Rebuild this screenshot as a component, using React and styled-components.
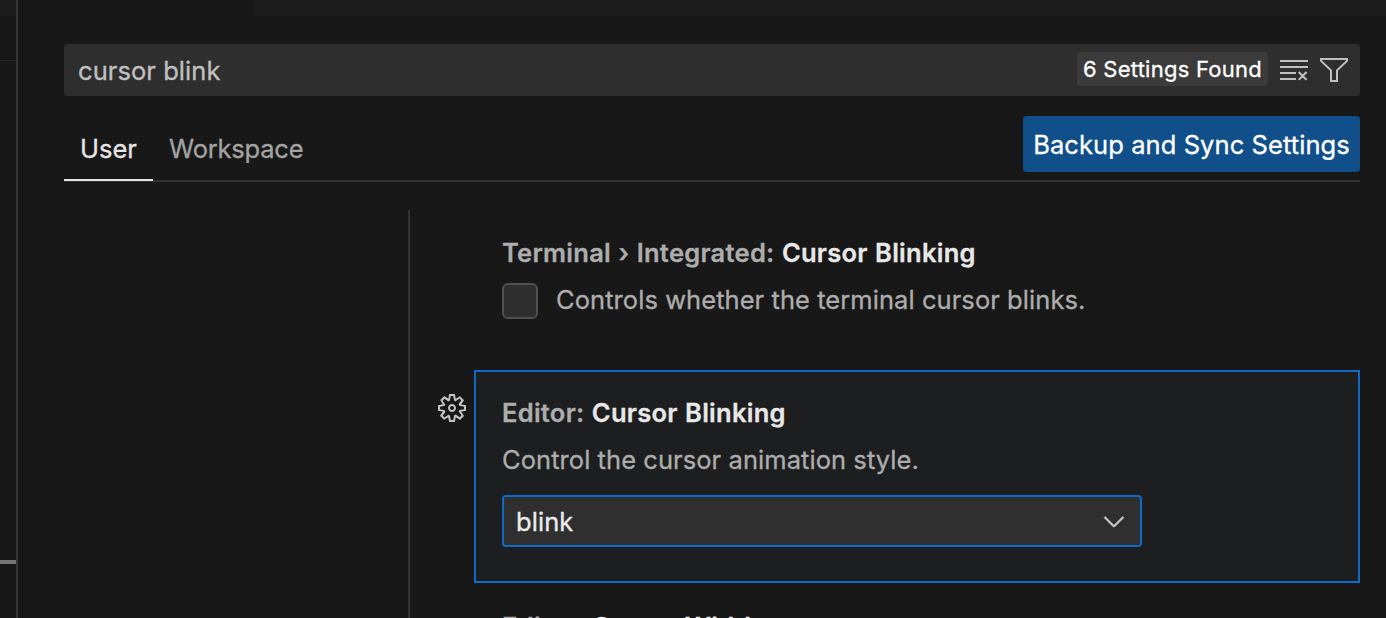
import React from "react";
import styled, { createGlobalStyle } from "styled-components";
import { VscChevronDown, VscClearAll, VscFilter, VscGear } from "react-icons/vsc";

const GlobalStyle = createGlobalStyle`
  * { box-sizing: border-box; }
  body {
    margin: 0;
    background: #181818;
    color: #adadad;
    font-family: Inter, "Liberation Sans", sans-serif;
    font-size: 25.5px;
    line-height: 36px;
    letter-spacing: 0.06px;
    -webkit-text-stroke: 0.3px currentColor;
    overflow: hidden;
  }
  svg { display: block; flex: none; }
`;

const Window = styled.div`
  display: flex;
  height: 618px;
  overflow: hidden;
`;

const SidePane = styled.div`
  display: flex;
  flex-direction: column;
  flex: none;
  width: 18px;
  border-right: 2px solid #353535;
`;

const SideHeader = styled.div`
  height: 16px;
  background: #1d1d1d;
`;

const SideSection = styled.div`
  height: 45px;
  border-bottom: 1px solid #262626;
`;

const SideHandle = styled.div`
  height: 4px;
  margin-top: 499px;
  background: #757575;
`;

const Editor = styled.main`
  display: flex;
  flex-direction: column;
  flex: 1;
  min-width: 0;
`;

const TabStrip = styled.div`
  flex: none;
  height: 16px;
  margin-left: 236px;
  background: #1d1d1d;
`;

const Content = styled.div`
  display: flex;
  flex-direction: column;
  flex: 1;
  min-height: 0;
  padding: 28px 26px 0 46px;
`;

const SearchBar = styled.div`
  display: flex;
  align-items: center;
  flex: none;
  height: 52px;
  padding: 0 10px 0 14px;
  border-radius: 4px;
  background: #2e2e2e;
  color: #c0c0c0;
`;

const Query = styled.span`
  flex: 1;
  padding-top: 2px;
`;

const ResultCount = styled.span`
  width: 191px;
  height: 34px;
  margin: 0 10px 2px 0;
  border-radius: 4px;
  background: #3b3b3b;
  color: #fff;
  font-size: 22px;
  line-height: 34px;
  letter-spacing: 0.25px;
  text-align: center;
  white-space: nowrap;
`;

const SearchAction = styled.span`
  margin-right: ${(p) => p.$gap || "0"};
`;

const ScopeBar = styled.div`
  display: flex;
  align-items: flex-start;
  flex: none;
  height: 86px;
  padding-top: 20px;
  border-bottom: 2px solid #333;
`;

const ScopeTab = styled.div`
  width: ${(p) => p.$width};
  height: 65px;
  padding: 15px 0 0 16px;
  border-bottom: 2px solid ${(p) => (p.$active ? "#e4e4e4" : "transparent")};
  color: ${(p) => (p.$active ? "#e6e6e6" : "#a3a3a3")};
  letter-spacing: ${(p) => (p.$active ? "0" : "-0.2px")};
`;

const SyncButton = styled.button`
  width: 337px;
  height: 56px;
  margin-left: auto;
  padding: 2px 0 0;
  border: 0;
  border-radius: 4px;
  background: #114f8a;
  color: #fff;
  font: inherit;
  letter-spacing: 0.08px;
  white-space: nowrap;
`;

const Body = styled.div`
  display: flex;
  flex: 1;
  min-height: 0;
  padding-top: 28px;
`;

const Outline = styled.div`
  flex: none;
  width: 346px;
  border-right: 2px solid #333;
`;

const Settings = styled.div`
  flex: 1;
  min-width: 0;
`;

const Setting = styled.section`
  padding-left: 92px;
  height: 160px;
  padding-top: 25px;
`;

const Title = styled.h3`
  margin: 0;
  font-size: 25.5px;
  font-weight: 600;
  line-height: 36px;
  letter-spacing: 0.27px;
  word-spacing: 0.7px;
  white-space: nowrap;
`;

const Name = styled.span`
  color: #e8e8e8;
`;

const Description = styled.div`
  margin-top: 11px;
  white-space: nowrap;
`;

const CheckRow = styled.label`
  display: flex;
  align-items: center;
  gap: 18px;
  margin-top: 12px;
  height: 36px;
  white-space: nowrap;
`;

const CheckBox = styled.span`
  width: 36px;
  height: 36px;
  border: 2px solid #505050;
  border-radius: 6px;
  background: #2e2e2e;
`;

const CheckLabel = styled.span`
  padding-bottom: 2px;
`;

const FocusedRow = styled.div`
  display: flex;
  padding-left: 26px;
  color: #c4c4c4;
`;

const GearSlot = styled.div`
  flex: none;
  width: 38px;
  padding-top: 22px;
`;

const FocusedSetting = styled.section`
  flex: 1;
  height: 213px;
  padding: 23px 26px;
  border: 2px solid #0f69c8;
  background: #1d1e1f;
  color: #adadad;
`;

const Select = styled.div`
  display: flex;
  align-items: center;
  justify-content: space-between;
  width: 640px;
  height: 52px;
  margin-top: 17px;
  padding: 0 10px 0 12px;
  border: 2px solid #0f69c8;
  border-radius: 4px;
  background: #2f2f2f;
  color: #ededed;
`;

const SelectValue = styled.span`
  padding-top: 2px;
`;

const SelectIcon = styled.span`
  color: #c8c8c8;

  path {
    stroke: currentColor;
    stroke-width: 0.3px;
  }
`;

const NextSetting = styled.section`
  padding: 26px 0 0 92px;
`;

export default function App() {
  return (
    <>
      <GlobalStyle />
      <Window>
        <SidePane>
          <SideHeader />
          <SideSection />
          <SideHandle />
        </SidePane>
        <Editor>
          <TabStrip />
          <Content>
            <SearchBar>
              <Query>cursor blink</Query>
              <ResultCount>6 Settings Found</ResultCount>
              <SearchAction $gap="8px"><VscClearAll size={32} /></SearchAction>
              <SearchAction><VscFilter size={32} /></SearchAction>
            </SearchBar>
            <ScopeBar>
              <ScopeTab $active $width="89px">User</ScopeTab>
              <ScopeTab $width="166px">Workspace</ScopeTab>
              <SyncButton>Backup and Sync Settings</SyncButton>
            </ScopeBar>
            <Body>
              <Outline />
              <Settings>
                <Setting>
                  <Title>Terminal › Integrated: <Name>Cursor Blinking</Name></Title>
                  <CheckRow>
                    <CheckBox />
                    <CheckLabel>Controls whether the terminal cursor blinks.</CheckLabel>
                  </CheckRow>
                </Setting>
                <FocusedRow>
                  <GearSlot><VscGear size={32} /></GearSlot>
                  <FocusedSetting>
                    <Title>Editor: <Name>Cursor Blinking</Name></Title>
                    <Description>Control the cursor animation style.</Description>
                    <Select>
                      <SelectValue>blink</SelectValue>
                      <SelectIcon><VscChevronDown size={32} /></SelectIcon>
                    </Select>
                  </FocusedSetting>
                </FocusedRow>
                <NextSetting>
                  <Title>Editor: <Name>Cursor Width</Name></Title>
                </NextSetting>
              </Settings>
            </Body>
          </Content>
        </Editor>
      </Window>
    </>
  );
}
